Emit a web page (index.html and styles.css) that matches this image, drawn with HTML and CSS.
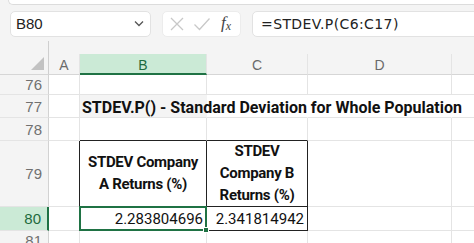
FILE: index.html
```html
<!DOCTYPE html>
<html>
<head>
<meta charset="utf-8">
<link rel="stylesheet" href="styles.css">
</head>
<body>
<div class="app">
  <div class="topstrip"></div>
  <div class="fbar">
    <div class="namebox">
      <span class="nb-text">B80</span>
      <svg class="chev" width="10" height="7" viewBox="0 0 10 7"><path d="M1 1.5 L5 5.5 L9 1.5" fill="none" stroke="#555" stroke-width="1.3"/></svg>
    </div>
    <div class="fbtns">
      <svg class="ico" width="16" height="16" viewBox="0 0 16 16"><path d="M2 2 L14 14 M14 2 L2 14" stroke="#c8c8c8" stroke-width="1.3" fill="none"/></svg>
      <svg class="ico" width="18" height="16" viewBox="0 0 18 16"><path d="M1.5 8.5 L6.5 13.5 L16.5 2.5" stroke="#c8c8c8" stroke-width="1.3" fill="none"/></svg>
      <span class="fx">f<sub>x</sub></span>
    </div>
    <div class="finput">=STDEV.P(C6:C17)</div>
  </div>
  <div class="sheet">
    <div class="corner"><span class="tri"></span></div>
    <div class="ch">A</div>
    <div class="ch sel">B</div>
    <div class="ch">C</div>
    <div class="ch">D</div>
    <div class="ch last"></div>

    <div class="rh">76</div>
    <div class="c"></div><div class="c"></div><div class="c"></div><div class="c"></div><div class="c last"></div>

    <div class="rh">77</div>
    <div class="c"></div>
    <div class="c title"><span>STDEV.P() - Standard Deviation for Whole Population</span></div>
    <div class="c nb"></div><div class="c nb"></div><div class="c last"></div>

    <div class="rh">78</div>
    <div class="c"></div><div class="c tb"></div><div class="c tb"></div><div class="c"></div><div class="c last"></div>

    <div class="rh">79</div>
    <div class="c"></div>
    <div class="c hd hb">STDEV Company A Returns (%)</div>
    <div class="c hd hc">STDEV Company B Returns (%)</div>
    <div class="c"></div><div class="c last"></div>

    <div class="rh sel">80</div>
    <div class="c"></div>
    <div class="c val active">2.283804696<span class="handle"></span></div>
    <div class="c val vc">2.341814942</div>
    <div class="c"></div><div class="c last"></div>

    <div class="rh">81</div>
    <div class="c"></div><div class="c"></div><div class="c"></div><div class="c"></div><div class="c last"></div>
  </div>
</div>
</body>
</html>
```
FILE: styles.css
```css
* { box-sizing: border-box; }
html, body { margin: 0; padding: 0; }
body {
  width: 474px; height: 243px; overflow: hidden;
  background: #f4f4f4;
  font-family: "Liberation Sans", Arial, sans-serif;
}
.app { display: flex; flex-direction: column; }
.app > * { flex-shrink: 0; }
.topstrip {
  height: 5px; margin-left: 8px;
  background: #fff;
  border-bottom: 1px solid #dcdcdc;
  border-left: 1px solid #dcdcdc;
  border-bottom-left-radius: 6px;
}
.fbar {
  display: flex; align-items: center;
  height: 27px; margin-top: 5px;
  padding-left: 10px;
  gap: 11px;
}
.namebox, .fbtns, .finput {
  height: 26px;
  background: #fff;
  border: 1px solid #e2e2e2;
  border-radius: 5px;
  display: flex; align-items: center;
}
.namebox {
  width: 141px; padding: 0 6px 0 5px;
  justify-content: space-between;
  font-size: 15px; color: #222;
}
.fbtns {
  width: 79px; padding: 0 4px 0 6px; gap: 8px;
  border-color: #ececec;
}
.fx {
  font-family: "Liberation Serif", serif; font-style: italic;
  font-size: 17px; color: #444; margin-left: 2px;
}
.fx sub { font-size: 12px; vertical-align: -2px; }
.finput {
  flex: 1; margin-right: -8px;
  padding-left: 8px;
  font-family: "DejaVu Sans", sans-serif;
  font-size: 14px; letter-spacing: 0.4px; color: #222;
  border-top-right-radius: 0; border-bottom-right-radius: 0;
}
.sheet {
  margin-top: 17px;
  display: grid;
  grid-template-columns: 49px 31px 127px 101px 144px 1fr;
  grid-template-rows: 21px 20px 23px 23px 66px 24px 20px;
  position: relative;
}
.corner {
  border-right: 1px solid #cfcfcf;
  border-bottom: 1px solid #d6d6d6;
  position: relative;
}
.corner::before {
  content: ""; position: absolute; right: -1px; top: -13px; height: 13px;
  border-right: 1px solid #cfcfcf;
}
.tri {
  position: absolute; right: 4px; bottom: 4px;
  width: 0; height: 0;
  border-left: 13px solid transparent;
  border-bottom: 13px solid #c2c2c2;
}
.ch {
  display: flex; align-items: center; justify-content: center;
  font-size: 14px; color: #6a6a6a;
  border-bottom: 1px solid #d6d6d6;
  border-right: 1px solid #e4e4e4;
  padding-top: 2px;
}
.ch.sel {
  background: #cbead6; color: #1e6b3e;
  border-bottom: 2px solid #1f7244;
  padding-top: 3px;
}
.ch.last { border-right: none; }
.rh {
  display: flex; align-items: center; justify-content: flex-end;
  padding-right: 6px;
  font-size: 15px; color: #707070;
  border-right: 1px solid #d2d2d2;
  border-bottom: 1px solid #e4e4e4;
}
.rh.sel {
  background: #cbead6; color: #1e6b3e;
  border-right: 2px solid #1f7244;
}
.c {
  background: #fff;
  border-right: 1px solid #e4e4e4;
  border-bottom: 1px solid #e4e4e4;
  position: relative;
}
.c.last { border-right: none; }
.c.nb { border-right-color: transparent; }
.title { overflow: visible; border-right-color: transparent; z-index: 2; background: transparent; }
.title span {
  position: absolute; left: 2px; top: 2px;
  white-space: nowrap;
  font-family: Roboto, "Liberation Sans", sans-serif;
  font-weight: 700; font-size: 16px; letter-spacing: 0; color: #111;
  line-height: 22px;
}
.tb { border-bottom: 1px solid #222; }
.hd {
  display: flex; align-items: center; justify-content: center;
  text-align: center;
  font-family: Roboto, "Liberation Sans", sans-serif;
  font-weight: 700; font-size: 15px; letter-spacing: -0.3px; color: #111;
  line-height: 22px;
  border-bottom: 1px solid #222;
  border-right: 1px solid #222;
}
.hb { border-left: 1px solid #222; margin-left: -1px; padding: 0 4px 2px; }
.hc { padding: 0 10px 2px; }
.val {
  display: flex; align-items: center; justify-content: flex-end;
  font-family: Roboto, "Liberation Sans", sans-serif;
  font-size: 15px; color: #111; padding-right: 2px;
}
.active {
  border: 2px solid #1f7244;
  margin: -1px 0 0 -1px;
  z-index: 3;
}
.vc { border-right: 1px solid #222; border-bottom: 1px solid #222; padding-right: 3px; }
.handle {
  position: absolute; right: -4px; bottom: -4px;
  width: 6px; height: 6px; background: #1f7244;
  border: 1px solid #fff;
}
```
